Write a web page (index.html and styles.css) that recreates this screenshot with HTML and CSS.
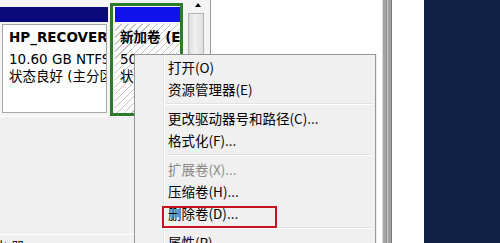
FILE: index.html
```html
<!DOCTYPE html>
<html>
<head>
<meta charset="utf-8">
<link rel="stylesheet" href="styles.css">
</head>
<body>
<div class="screen">
  <div class="dm">
    <div class="disk-row">
      <div class="part p1">
        <div class="bar bar-navy"></div>
        <div class="pbox">
          <div class="ln ln1 bold">HP_RECOVERY</div>
          <div class="ln ln2">10.60 GB NTFS</div>
          <div class="ln ln3">状态良好 (主分区)</div>
        </div>
      </div>
      <div class="part p2">
        <div class="bar bar-blue"></div>
        <div class="pbox hatch">
          <div class="ln ln1 bold">新加卷 (E:)</div>
          <div class="ln ln2">500 MB NTFS</div>
          <div class="ln ln3">状态良好 (主分区)</div>
        </div>
      </div>
      <div class="vscroll">
        <div class="arrow"></div>
        <div class="thumb"></div>
      </div>
    </div>
    <div class="lower">
      <div class="rowline"></div>
      <div class="label">化 器</div>
    </div>
  </div>
  <div class="blank"></div>
  <div class="winborder"></div>
  <div class="gap"></div>
  <div class="navy-panel"></div>

  <div class="menu">
    <div class="item">打开(O)</div>
    <div class="item">资源管理器(E)</div>
    <div class="sep"></div>
    <div class="item">更改驱动器号和路径(C)...</div>
    <div class="item">格式化(F)...</div>
    <div class="sep"></div>
    <div class="item disabled">扩展卷(X)...</div>
    <div class="item">压缩卷(H)...</div>
    <div class="item">删除卷(D)...</div>
    <div class="sep"></div>
    <div class="item">属性(P)</div>
  </div>
  <div class="highlight"></div>
</div>
</body>
</html>
```

FILE: styles.css
```css
html, body {
  margin: 0;
  padding: 0;
  background: #ffffff;
}
.screen {
  position: relative;
  width: 500px;
  height: 243px;
  overflow: hidden;
  display: flex;
  font-family: "DejaVu Sans", "Noto Sans CJK SC", sans-serif;
  font-size: 13.5px;
  color: #000;
}
.dm {
  width: 210px;
  border-right: 1px solid #9a9a9a;
  display: flex;
  flex-direction: column;
  background: #f0f0f0;
}
.disk-row {
  height: 116px;
  display: flex;
  background: #f4f4f4;
}
.part {
  display: flex;
  flex-direction: column;
  box-sizing: border-box;
  overflow: hidden;
}
.p1 {
  width: 108px;
  padding-top: 7px;
}
.p2 {
  width: 73px;
  margin-left: 2px;
  margin-top: 3px;
  height: 113px;
  border: 3px solid #2b7d2b;
}
.bar {
  height: 15px;
  flex: none;
}
.bar-navy {
  background: #0a0a7c;
}
.bar-blue {
  background: #1212ec;
  margin: 1px 0 0 2px;
}
.pbox {
  flex: 1;
  background: #ffffff;
  border: 1px solid #a6a6a6;
  margin: 2px 1px 3px 2px;
  padding: 2px 0 0 6px;
  white-space: nowrap;
  overflow: hidden;
}
.p2 .pbox {
  margin: 2px 0 0 2px;
  border: none;
  padding: 3px 0 0 5px;
}
.hatch {
  background: repeating-linear-gradient(135deg, #ffffff 0px, #ffffff 4px, #c4c4c4 4px, #c4c4c4 5px);
}
.ln {
  line-height: 20px;
}
.ln1 {
  height: 22px;
}
.ln2 {
  height: 17px;
}
.bold {
  font-weight: bold;
}
.vscroll {
  width: 24px;
  margin-left: 3px;
  display: flex;
  flex-direction: column;
  align-items: center;
}
.arrow {
  margin-top: 3px;
  width: 0;
  height: 0;
  border-left: 3px solid transparent;
  border-right: 3px solid transparent;
  border-bottom: 4px solid #000;
}
.thumb {
  margin-top: 6px;
  width: 16px;
  height: 60px;
  box-sizing: border-box;
  border: 1px solid #b4b4b4;
  background: linear-gradient(90deg, #dcdcdc, #f0f0f0 40%, #e0e0e0);
  margin-right: 4px;
}
.lower {
  flex: 1;
  background: #f0f0f0;
  border-top: 1px solid #ffffff;
  display: flex;
  flex-direction: column;
  justify-content: flex-end;
}
.rowline {
  height: 1px;
  background: #ffffff;
  margin-right: 4px;
}
.label {
  height: 8px;
  padding-top: 0;
  line-height: 24px;
  font-size: 13px;
  margin-left: -6px;
  white-space: nowrap;
}
.blank {
  width: 171px;
  background: #ffffff;
}
.winborder {
  width: 10px;
  background: linear-gradient(90deg, #dadada 0px, #dadada 1px, #a4a4a4 1px, #a4a4a4 4px, #8e8e8e 4px, #8e8e8e 5px, #cfcfcf 5px, #cfcfcf 6px, #a0a0a0 6px, #a0a0a0 9px, #7a7a7a 9px);
}
.gap {
  width: 32px;
  background: #ffffff;
}
.navy-panel {
  flex: 1;
  background: #0f2145;
}
.menu {
  position: absolute;
  left: 134px;
  top: 54px;
  width: 242px;
  height: 240px;
  box-sizing: border-box;
  border: 1px solid #979797;
  background: #f0f0f0;
  padding: 1px 2px;
  font-family: "Noto Sans CJK SC", "DejaVu Sans", sans-serif;
  box-shadow: 1px 1px 1px rgba(0, 0, 0, 0.08);
}
.menu::before {
  content: "";
  position: absolute;
  left: 28px;
  top: 0;
  bottom: 0;
  width: 1px;
  background: #e2e3e3;
  border-right: 1px solid #ffffff;
}
.item {
  height: 22px;
  line-height: 22px;
  padding-left: 31px;
  white-space: nowrap;
  position: relative;
}
.disabled {
  color: #8a8a8a;
}
.sep {
  height: 7px;
  margin-left: 29px;
  position: relative;
  box-sizing: border-box;
  padding-top: 3px;
}
.sep::after {
  content: "";
  display: block;
  height: 1px;
  background: #e2e3e3;
  border-bottom: 1px solid #ffffff;
}
.highlight {
  position: absolute;
  left: 162px;
  top: 206px;
  width: 115px;
  height: 22px;
  box-sizing: border-box;
  border: 2px solid #c4141e;
}
```
